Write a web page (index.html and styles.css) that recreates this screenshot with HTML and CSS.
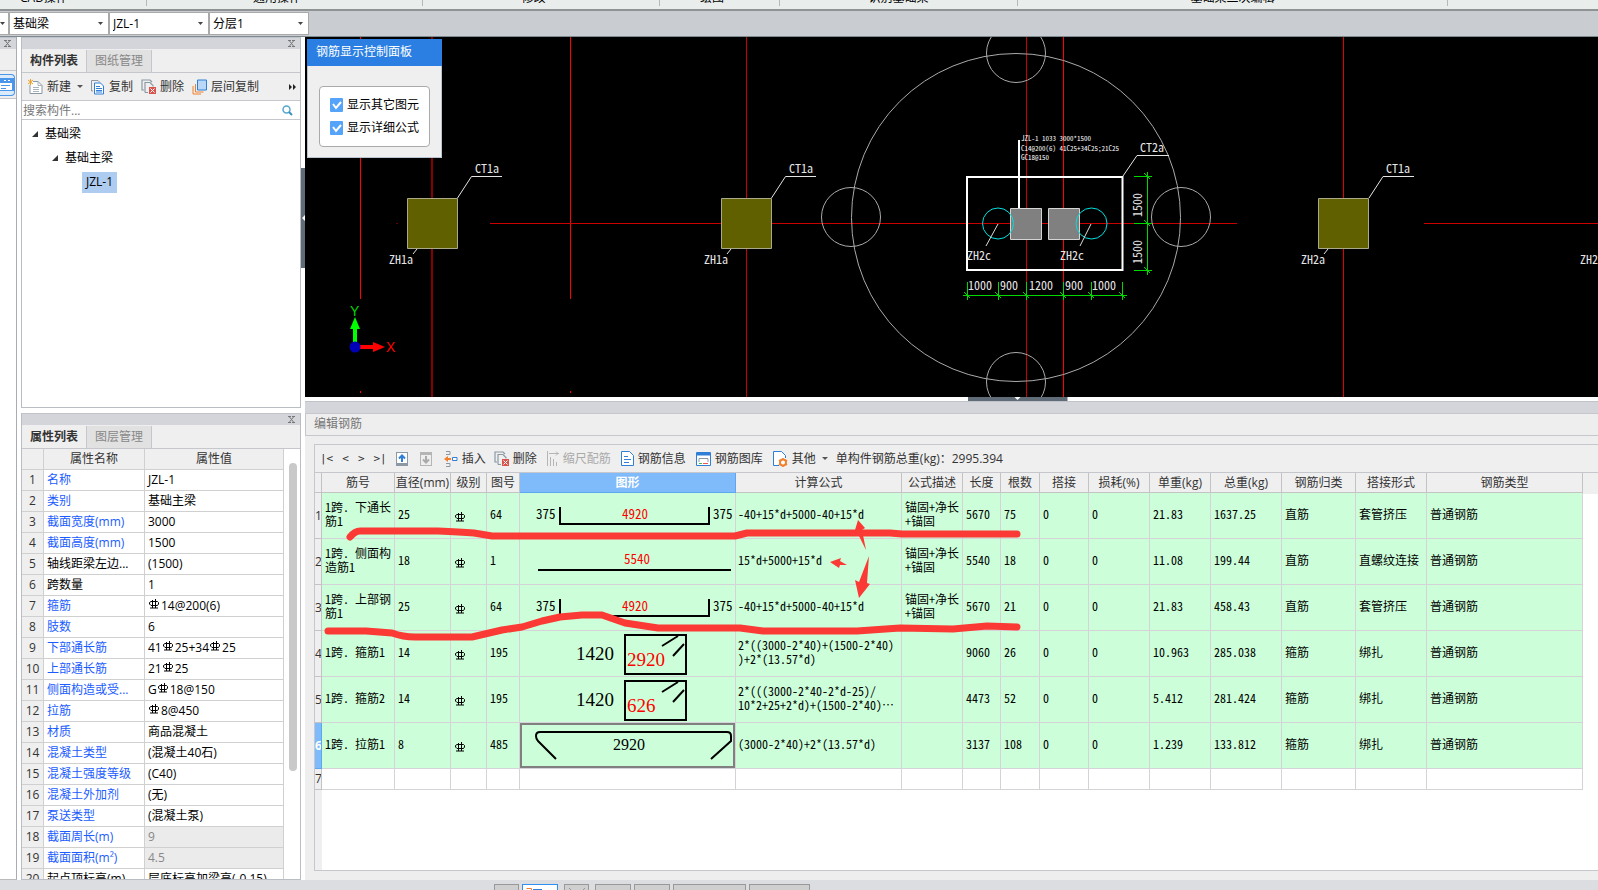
FILE: index.html
```html
<!DOCTYPE html>
<html lang="zh-CN">
<head>
<meta charset="utf-8">
<title>编辑钢筋</title>
<link rel="stylesheet" href="styles.css">
</head>
<body>
<svg class="defs" aria-hidden="true">
  <symbol id="rebar" viewBox="0 0 10 10"><path d="M3.500 1v8M6.500 0v9M1 9h8M2 2.500h6.500l1 1v1.500l-1 1.500H2L.5 5V3.500z" fill="none" stroke="currentColor"/></symbol>
  <symbol id="close" viewBox="0 0 7 7"><path d="M1.500 1l4 5M5.500 1l-4 5M0 .5h3M4 .5h3M0 6.500h3M4 6.500h3" fill="none" stroke="#777"/></symbol>
  <symbol id="del" viewBox="0 0 15 15"><path d="M3 11H1V1h8l2 2M4 13.500V3.500h5l3 3v1M4 13.500h3" fill="none" stroke="#8a99a3" stroke-width="1.200"/><path d="M8 8h7v7H8z" fill="#d9534f"/><path d="M9.500 9.500l4 4M13.500 9.500l-4 4" stroke="#fff"/></symbol>
</svg>

<header class="ribbon">
  <span class="group g-cad">CAD操作</span><span class="group g-common">通用操作</span><span class="group g-edit">修改</span><span class="group g-draw">绘图</span><span class="group g-detect">识别基础梁</span><span class="group g-second">基础梁二次编辑</span>
</header>

<div class="selectors">
  <select class="combo stub" aria-label="楼层"><option></option></select>
  <select class="combo" aria-label="构件类型"><option>基础梁</option></select>
  <select class="combo" aria-label="构件"><option>JZL-1</option></select>
  <select class="combo" aria-label="分层"><option>分层1</option></select>
</div>

<main class="workspace">
  <aside class="strip">
    <div class="titlebar"><button class="x" aria-label="关闭"><svg width="7" height="7"><use href="#close"/></svg></button></div>
    <div class="strip-head"></div>
    <div class="strip-tool"><button aria-label="导航"><svg width="14" height="13" viewBox="0 0 14 13"><path d="M0 0h14v13H0z" fill="#4a96ea"/><path d="M0 5h12v7H0z" fill="#fff"/><path d="M4 2.500h2M8 2.500h2" stroke="#fff"/><path d="M1 7.500h9M1 10.500h5" stroke="#4a96ea"/></svg></button></div>
  </aside>

  <section class="side">
    <div class="panel">
      <div class="titlebar"><button class="x" aria-label="关闭"><svg width="7" height="7"><use href="#close"/></svg></button></div>
      <div class="tabs"><button class="tab on">构件列表</button><button class="tab">图纸管理</button></div>
      <div class="tools">
        <button><svg width="15" height="16" viewBox="0 0 15 16"><path d="M5 2.500h5l4 4v8H2V6" fill="#fff" stroke="#8a99a3"/><path d="M10 2.500v4h4M5 8.500h6M5 10.500h6M5 12.500h6" fill="none" stroke="#a9b4bb"/><path d="M0 1l5 4M5 1L0 5M2.500 0v6" stroke="#f0a020"/></svg>新建<i class="caret"></i></button>
        <button><svg width="14" height="16" viewBox="0 0 14 16"><path d="M2 12H.5V1.500H7l2 2" fill="none" stroke="#8a99a3"/><path d="M3.500 4h6l3 3v8h-9z" fill="#fff" stroke="#2f7fd6"/><path d="M5 7.500h4M5 9.500h6M5 11.500h6M5 13h6" stroke="#2f7fd6"/></svg>复制</button>
        <button><svg width="15" height="15"><use href="#del"/></svg>删除</button>
        <button><svg width="15" height="16" viewBox="0 0 15 16"><path d="M5.500 1h9v10h-9z" fill="#b9d8f8" stroke="#2f7fd6"/><path d="M3.500 5v8h8M1 7v8h8" fill="none" stroke="#f08030"/></svg>层间复制</button>
        <button class="more" aria-label="更多"><svg width="8" height="6" viewBox="0 0 8 6"><path d="M0 0l3 3-3 3zM4 0l3 3-3 3z" fill="#222"/></svg></button>
      </div>
      <div class="search"><input type="text" placeholder="搜索构件..." aria-label="搜索构件"><svg width="11" height="11" viewBox="0 0 11 11"><circle cx="4.500" cy="4.500" r="3.500" fill="none" stroke="#58a6cf" stroke-width="1.500"/><path d="M7 7l3 3" stroke="#3b8fbf" stroke-width="2"/></svg></div>
      <div class="tree">
        <div class="node"><i class="tri"></i>基础梁</div>
        <div class="node l2"><i class="tri"></i>基础主梁</div>
        <div class="node l3"><span>JZL-1</span></div>
      </div>
    </div>

    <div class="panel">
      <div class="titlebar"><button class="x" aria-label="关闭"><svg width="7" height="7"><use href="#close"/></svg></button></div>
      <div class="tabs"><button class="tab on">属性列表</button><button class="tab">图层管理</button></div>
      <div class="props">
        <table>
          <colgroup><col class="p-no"><col class="p-name"><col></colgroup>
          <thead><tr><th></th><th>属性名称</th><th>属性值</th></tr></thead>
          <tbody>
            <tr><th>1</th><td>名称</td><td>JZL-1</td></tr>
            <tr><th>2</th><td>类别</td><td>基础主梁</td></tr>
            <tr><th>3</th><td>截面宽度(mm)</td><td>3000</td></tr>
            <tr><th>4</th><td>截面高度(mm)</td><td>1500</td></tr>
            <tr class="plain"><th>5</th><td>轴线距梁左边...</td><td>(1500)</td></tr>
            <tr class="plain"><th>6</th><td>跨数量</td><td>1</td></tr>
            <tr><th>7</th><td>箍筋</td><td><svg class="rb"><use href="#rebar"/></svg>14@200(6)</td></tr>
            <tr><th>8</th><td>肢数</td><td>6</td></tr>
            <tr><th>9</th><td>下部通长筋</td><td>41<svg class="rb"><use href="#rebar"/></svg>25+34<svg class="rb"><use href="#rebar"/></svg>25</td></tr>
            <tr><th>10</th><td>上部通长筋</td><td>21<svg class="rb"><use href="#rebar"/></svg>25</td></tr>
            <tr><th>11</th><td>侧面构造或受...</td><td>G<svg class="rb"><use href="#rebar"/></svg>18@150</td></tr>
            <tr><th>12</th><td>拉筋</td><td><svg class="rb"><use href="#rebar"/></svg>8@450</td></tr>
            <tr><th>13</th><td>材质</td><td>商品混凝土</td></tr>
            <tr><th>14</th><td>混凝土类型</td><td>(混凝土40石)</td></tr>
            <tr><th>15</th><td>混凝土强度等级</td><td>(C40)</td></tr>
            <tr><th>16</th><td>混凝土外加剂</td><td>(无)</td></tr>
            <tr><th>17</th><td>泵送类型</td><td>(混凝土泵)</td></tr>
            <tr class="locked"><th>18</th><td>截面周长(m)</td><td>9</td></tr>
            <tr class="locked"><th>19</th><td>截面面积(m²)</td><td>4.5</td></tr>
            <tr class="plain"><th>20</th><td>起点顶标高(m)</td><td>层底标高加梁高(-0.15)</td></tr>
          </tbody>
        </table>
        <div class="scroll"><i></i></div>
      </div>
    </div>
  </section>

  <div class="split-v"><i></i></div>

  <section class="center">
    <div class="canvas">
      <svg class="cad" width="100%" height="100%">
        <g transform="translate(-305 -37)" fill="none">
          <g stroke="#f00">
            <path d="M360.500 37V299M570.500 37V299M1063.500 37V397M360.500 391v2M570.500 391v2"/>
            <path d="M1343.500 37V397" stroke="#e00000"/>
            <path d="M432 37V397" stroke="#860000" stroke-width="2"/>
            <path d="M746.500 37V397M490 223.500H1237M1424 223.500H1900M1026.500 37V397" stroke="#c80000"/>
            <path d="M396 223.500h2" stroke="#600"/>
          </g>
          <g stroke="#aaa">
            <ellipse cx="1016" cy="217.500" rx="164.500" ry="164"/>
            <circle cx="1016" cy="53" r="29.500"/><circle cx="851" cy="217" r="29.500"/><circle cx="1181" cy="217" r="29.500"/><circle cx="1016" cy="382" r="29.500"/>
          </g>
          <g fill="#606000" stroke="#aaa98a">
            <path d="M407.500 198.500h50v50h-50zM721.500 198.500h50v50h-50zM1318.500 198.500h50v50h-50z"/>
          </g>
          <g stroke="#e4e4e4">
            <path d="M457.500 198L471.500 176.500H502M771.500 198L785.500 176.500H816M1369 198L1383 176.500H1414M1123 176L1137 155.500H1169"/>
            <path d="M413 254l4-5M727 254l4-5M1324 254l4-5"/>
          </g>
          <g fill="#808080" stroke="#d4d4d4">
            <path d="M1010.500 208.500h31v31h-31zM1048.500 208.500h31v31h-31z"/>
          </g>
          <path d="M967 177h155.500v93H967zM1019 140v68" stroke="#fff" stroke-width="2"/>
          <circle cx="998" cy="223.500" r="15.500" stroke="#00e0e0"/><circle cx="1091.500" cy="223.500" r="15.500" stroke="#00e0e0"/>
          <path d="M998 224l-12 22M1091 224l-11 22" stroke="#ddd"/>
          <g stroke="#00d800">
            <path d="M963 295.500h164M967.500 282v18M998.500 282v18M1026.500 282v18M1063.500 282v18M1091.500 282v18M1122.500 282v18M964 292l6 6M995 292l6 6M1023 292l6 6M1060 292l6 6M1088 292l6 6M1119 292l6 6"/>
            <path d="M1147.500 172v103M1134 176.500h18M1134 223.500h18M1134 270.500h18M1144 173l6 6M1144 220l6 6M1144 267l6 6"/>
          </g>
          <g class="cad-text">
            <text x="475" y="173">CT1a</text><text x="789" y="173">CT1a</text><text x="1386" y="173">CT1a</text><text x="1140" y="152">CT2a</text>
            <text x="389" y="264">ZH1a</text><text x="704" y="264">ZH1a</text><text x="1301" y="264">ZH2a</text><text x="1580" y="264">ZH2a</text>
            <text x="967" y="260">ZH2c</text><text x="1060" y="260">ZH2c</text>
            <text x="968" y="290">1000</text><text x="1000" y="290">900</text><text x="1029" y="290">1200</text><text x="1065" y="290">900</text><text x="1092" y="290">1000</text>
            <text transform="translate(1142 217) rotate(-90)">1500</text><text transform="translate(1142 264) rotate(-90)">1500</text>
          </g>
          <g class="cad-note">
            <text x="1021" y="141">JZL-1 1033 3000*1500</text><text x="1021" y="151">C14@200(6) 41C25+34C25;21C25</text><text x="1021" y="160">GC18@150</text>
          </g>
          <path d="M355 342V328" stroke="#0f0" stroke-width="4"/><path d="M350 329l5-12 5 12z" fill="#0f0"/>
          <path d="M360 347h14" stroke="#f00" stroke-width="4"/><path d="M373 342l12 5-12 5z" fill="#f00"/>
          <circle cx="355" cy="347" r="5.500" fill="#0000b8"/>
          <text class="axis" x="350" y="316" fill="#00d800">Y</text><text class="axis" x="386" y="352" fill="#f00">X</text>
        </g>
      </svg>
      <div class="dialog">
        <h2>钢筋显示控制面板</h2>
        <div class="dialog-body"><div class="checks">
          <label><input type="checkbox" checked>显示其它图元</label>
          <label><input type="checkbox" checked>显示详细公式</label>
        </div></div>
      </div>
    </div>
    <div class="split-h"><i></i></div>

    <div class="editor">
      <div class="titlebar"></div>
      <h2 class="editor-title">编辑钢筋</h2>
      <div class="editor-box">
        <div class="tools">
          <button class="nav">|&lt;</button><button class="nav">&lt;</button><button class="nav">&gt;</button><button class="nav">&gt;|</button>
          <button aria-label="上移" class="mv"><svg width="12" height="14" viewBox="0 0 12 14"><path d="M0 0h12v14H0z" fill="#8a99a3"/><path d="M1 1h10v10H1z" fill="#fff"/><path d="M6 10V4M3 6.500l3-3 3 3" fill="none" stroke="#2f7fd6" stroke-width="2"/></svg></button>
          <button aria-label="下移" class="mv"><svg width="12" height="14" viewBox="0 0 12 14"><path d="M0 0h12v14H0z" fill="#b5b5b5"/><path d="M1 3h10v10H1z" fill="#eee"/><path d="M6 4v6M3 7.500l3 3 3-3" fill="none" stroke="#aaa" stroke-width="2"/></svg></button>
          <button><svg width="14" height="16" viewBox="0 0 14 16"><path d="M2 .5h4v3H2M2 15.500h4v-3H2" fill="none" stroke="#8a99a3"/><path d="M0 8l4-3v2h3v2H4v2z" fill="#f08030"/><path d="M8.500 6.500H13v3H8.500z" fill="#fff" stroke="#2f7fd6"/></svg>插入</button>
          <button><svg width="15" height="15"><use href="#del"/></svg>删除</button>
          <button class="t-scale" disabled><svg width="12" height="15" viewBox="0 0 12 15"><path d="M.5 0v15M2 2.500h10M9 .5l2 2-2 2M3.500 6v9M6.500 8v7M9.500 11v4" fill="none" stroke="#b5b5b5"/></svg>缩尺配筋</button>
          <button class="t-info"><svg width="13" height="15" viewBox="0 0 13 15"><path d="M.5 .5h8l4 4v10H.5z" fill="#fff" stroke="#2f7fd6"/><path d="M3 5.500h4M3 8.500h7M3 11.500h5" stroke="#2f7fd6"/></svg>钢筋信息</button>
          <button class="t-lib"><svg width="15" height="14" viewBox="0 0 15 14"><path d="M.5 .5h14v13H.5z" fill="#fff" stroke="#2f7fd6"/><path d="M1 2h13" stroke="#2f7fd6" stroke-width="3"/><path d="M3 10V6.500h9V10" fill="none" stroke="#8a99a3"/><path d="M3 11.500h3" stroke="#4b4"/><path d="M7 11.500h5" stroke="#e55"/></svg>钢筋图库</button>
          <button class="t-other"><svg width="15" height="16" viewBox="0 0 15 16"><path d="M6 14.500H.5V.5h8l4 4V7" fill="#fff" stroke="#2f7fd6"/><circle cx="10" cy="11.500" r="3" fill="#fff" stroke="#f08030" stroke-width="2"/><path d="M10 7v1M10 15v1M6 9l1 1M13 13l1 1M6 14l1-1M13 10l1-1" stroke="#f08030" stroke-width="1.500"/></svg>其他<i class="caret"></i></button>
          <span class="total">单构件钢筋总重(kg)：2995.394</span>
        </div>
        <div class="grid-wrap">
          <table class="grid">
            <colgroup><col class="w-no"><col class="w-name"><col class="w-dia"><col class="w-lvl"><col class="w-fig"><col class="w-shape"><col class="w-calc"><col class="w-desc"><col class="w-len"><col class="w-cnt"><col class="w-lap"><col class="w-loss"><col class="w-loss"><col class="w-sum"><col class="w-cls"><col class="w-sum"><col class="w-type"></colgroup>
            <thead><tr><th></th><th>筋号</th><th>直径(mm)</th><th>级别</th><th>图号</th><th class="sel">图形</th><th>计算公式</th><th>公式描述</th><th>长度</th><th>根数</th><th>搭接</th><th>损耗(%)</th><th>单重(kg)</th><th>总重(kg)</th><th>钢筋归类</th><th>搭接形式</th><th>钢筋类型</th></tr></thead>
            <tbody>
              <tr><th>1</th><td>1跨. 下通长筋1</td><td>25</td><td><svg class="rb"><use href="#rebar"/></svg></td><td>64</td>
                <td class="shape"><svg width="215" height="45"><path d="M40 14v17h149V14" class="bar"/><text x="16" y="26">375</text><text x="102" y="26" class="red">4920</text><text x="193" y="26">375</text></svg></td>
                <td>-40+15*d+5000-40+15*d</td><td>锚固+净长+锚固</td><td>5670</td><td>75</td><td>0</td><td>0</td><td>21.83</td><td>1637.25</td><td>直筋</td><td>套管挤压</td><td>普通钢筋</td></tr>
              <tr><th>2</th><td>1跨. 侧面构造筋1</td><td>18</td><td><svg class="rb"><use href="#rebar"/></svg></td><td>1</td>
                <td class="shape"><svg width="215" height="45"><path d="M18 31h193" class="bar"/><text x="104" y="25" class="red">5540</text></svg></td>
                <td>15*d+5000+15*d</td><td>锚固+净长+锚固</td><td>5540</td><td>18</td><td>0</td><td>0</td><td>11.08</td><td>199.44</td><td>直筋</td><td>直螺纹连接</td><td>普通钢筋</td></tr>
              <tr><th>3</th><td>1跨. 上部钢筋1</td><td>25</td><td><svg class="rb"><use href="#rebar"/></svg></td><td>64</td>
                <td class="shape"><svg width="215" height="45"><path d="M40 14v17h149V14" class="bar"/><text x="16" y="26">375</text><text x="102" y="26" class="red">4920</text><text x="193" y="26">375</text></svg></td>
                <td>-40+15*d+5000-40+15*d</td><td>锚固+净长+锚固</td><td>5670</td><td>21</td><td>0</td><td>0</td><td>21.83</td><td>458.43</td><td>直筋</td><td>套管挤压</td><td>普通钢筋</td></tr>
              <tr><th>4</th><td>1跨. 箍筋1</td><td>14</td><td><svg class="rb"><use href="#rebar"/></svg></td><td>195</td>
                <td class="shape"><svg width="215" height="45"><path d="M105 4h61v39h-61zM142 15l16-10M153 25l11-12" class="bar"/><text x="56" y="29" class="big">1420</text><text x="107" y="35" class="big red">2920</text></svg></td>
                <td>2*((3000-2*40)+(1500-2*40)<br>)+2*(13.57*d)</td><td></td><td>9060</td><td>26</td><td>0</td><td>0</td><td>10.963</td><td>285.038</td><td>箍筋</td><td>绑扎</td><td>普通钢筋</td></tr>
              <tr><th>5</th><td>1跨. 箍筋2</td><td>14</td><td><svg class="rb"><use href="#rebar"/></svg></td><td>195</td>
                <td class="shape"><svg width="215" height="45"><path d="M105 4h61v39h-61zM142 15l16-10M153 25l11-12" class="bar"/><text x="56" y="29" class="big">1420</text><text x="107" y="35" class="big red">626</text></svg></td>
                <td>2*(((3000-2*40-2*d-25)/<br>10*2+25+2*d)+(1500-2*40)⋯</td><td></td><td>4473</td><td>52</td><td>0</td><td>0</td><td>5.412</td><td>281.424</td><td>箍筋</td><td>绑扎</td><td>普通钢筋</td></tr>
              <tr class="cur"><th>6</th><td>1跨. 拉筋1</td><td>8</td><td><svg class="rb"><use href="#rebar"/></svg></td><td>485</td>
                <td class="shape"><svg width="215" height="45"><path d="M36 36L18 18q-2-2-2-5 0-4 4-4H207q4 0 4 4v5L191 36" class="bar"/><text x="93" y="27" class="mid">2920</text></svg></td>
                <td>(3000-2*40)+2*(13.57*d)</td><td></td><td>3137</td><td>108</td><td>0</td><td>0</td><td>1.239</td><td>133.812</td><td>箍筋</td><td>绑扎</td><td>普通钢筋</td></tr>
              <tr class="blank"><th>7</th><td></td><td></td><td></td><td></td><td></td><td></td><td></td><td></td><td></td><td></td><td></td><td></td><td></td><td></td><td></td><td></td></tr>
            </tbody>
          </table>
        </div>
        <svg class="marks" width="720" height="200">
          <g transform="translate(-315 -445)" fill="#fc3a35">
            <g fill="none" stroke="#fc3a35" stroke-width="7" stroke-linecap="round" stroke-linejoin="round">
              <path d="M350 537Q355 531 360 531H438Q460 532 474 533L492 536H735L747 533H890L902 534H1017"/>
              <path d="M328 631H366L392 633Q403 637 415 637H472L502 630 522 627 542 621 560 617 582 615H602L625 623 658 628H740L763 631H857L900 628 953 629 987 626 1017 627"/>
            </g>
            <path d="M858 520l7 8-3 2 4 20-7-14-4-6zM830 562l11-4-1 3 7 4h-7l-1 3zM869 556l-2 27 3 1-11 14-4-18 4 2z"/>
          </g>
        </svg>
      </div>
    </div>
  </section>
</main>

<footer class="status">
  <button class="s1" aria-label="视图"></button><button class="s2 on" aria-label="动态输入"><svg width="16" height="5" viewBox="0 0 16 5"><path d="M.5 .5h5V5" fill="none" stroke="#f08030"/><path d="M7 1.500h9" stroke="#2f7fd6"/></svg></button><button class="s1 apart" aria-label="交点"><svg width="18" height="5" viewBox="0 0 18 5"><path d="M1 0l4 4M17 0l-4 4" stroke="#999"/></svg></button><button class="s2" aria-label="垂点"></button><button class="s2" aria-label="中点"></button><button class="s3" aria-label="顶点"></button><button class="s4" aria-label="坐标"></button>
</footer>
</body>
</html>
```
FILE: styles.css
```css
* { box-sizing: border-box; }
body {
  margin: 0;
  height: 100vh;
  display: flex;
  flex-direction: column;
  overflow: hidden;
  background: #fff;
  color: #000;
  font: 12px/16px "Open Sans", "Noto Sans CJK SC", sans-serif;
}
button, input, select { font: inherit; color: inherit; }
button { border: 0; padding: 0; background: none; }
h2 { margin: 0; font-size: 12px; font-weight: 400; }
.defs { position: absolute; width: 0; height: 0; }
.rb { width: 10px; height: 10px; margin: 0 2px 0 1px; }
.caret { border: 3px solid transparent; border-top-color: #555; border-bottom: 0; margin-left: 2px; }

/* ribbon */
.ribbon { display: flex; flex: 0 0 11px; overflow: hidden; background: #e9eeed; border-bottom: 2px solid #8f9394; }
.group { display: flex; align-items: flex-end; justify-content: center; height: 6px; line-height: 16px; border-right: 1px solid #b4b9ba; white-space: nowrap; }
.g-cad { width: 147px; justify-content: flex-start; padding-left: 20px; }
.g-common { width: 276px; padding-right: 15px; }
.g-edit { width: 237px; padding-right: 15px; }
.g-draw { width: 120px; padding-right: 15px; }
.g-detect { width: 238px; }
.g-second { width: 430px; }

.selectors { display: flex; flex: 0 0 26px; padding-top: 1px; background: #c9cdd1; border-bottom: 1px solid #7f8a90; }
.combo {
  width: 100px; height: 23px; padding: 0 3px; border: 1px solid #a9a9a9; border-radius: 0; appearance: none;
  background: #fff url("data:image/svg+xml,%3Csvg xmlns='http://www.w3.org/2000/svg' width='5' height='3'%3E%3Cpath d='M0 0h5L2.500 3z' fill='%23444'/%3E%3C/svg%3E") no-repeat right 5px center;
}
.stub { width: 9px; background-position: left 0 center; border-left: 0; }

/* workspace */
.workspace { flex: 1; min-height: 0; display: grid; grid-template-columns: 17px 4px 280px 4px minmax(0, 1fr); grid-template-rows: minmax(0, 1fr); }
.titlebar { display: flex; flex: none; align-items: center; justify-content: flex-end; height: 12px; padding-right: 5px; background: #d3d5da; border-top: 1px solid #c0c3c9; }
.x { display: flex; }
.strip { border-right: 1px solid #a9adb3; border-bottom: 1px solid #bbb; overflow: hidden; }
.strip-head { height: 22px; background: #efefef; border-bottom: 1px solid #c5c7cc; }
.strip-tool { display: flex; align-items: center; height: 28px; background: #efefef; border-bottom: 1px solid #c5c7cc; }
.strip-tool button { display: flex; align-items: center; width: 15px; height: 22px; border: 1px solid #4a96ea; border-left: 0; border-radius: 0 4px 4px 0; background: #dcebfb; overflow: hidden; }

.side { grid-column: 3; display: grid; grid-template-rows: minmax(0, 371fr) minmax(0, 467fr); gap: 5px; }
.panel { display: flex; flex-direction: column; min-height: 0; border: 1px solid #babdc3; border-top: 0; overflow: hidden; }
.tabs { display: flex; flex: 0 0 24px; padding-top: 1px; background: #efefef; border-bottom: 1px solid #c5c7cc; }
.tab { width: 65px; background: #e1e1e1; color: #888; border-right: 1px solid #c5c7cc; }
.tab.on { background: #efefef; color: #333; font-weight: 700; }
.tools { display: flex; align-items: center; height: 28px; background: #efefef; color: #333; border-bottom: 1px solid #c5c7cc; white-space: nowrap; }
.tools button { display: flex; align-items: center; gap: 4px; }
.panel .tools { padding: 0 3px 0 6px; gap: 8px; }
.panel .more { margin-left: auto; }
.search { display: flex; align-items: center; height: 19px; padding-right: 7px; border-bottom: 1px solid #c5c7cc; }
.search input { flex: 1; min-width: 0; border: 0; padding: 0 1px; height: 18px; outline: 0; background: none; }
.search input::placeholder { color: #777; }
.tree { padding-top: 2px; }
.node { display: flex; align-items: center; gap: 7px; height: 24px; padding-left: 10px; }
.l2 { padding-left: 30px; }
.l3 { padding-left: 60px; }
.l3 span { padding: 2px 4px 3px; background: #aecbf0; }
.tri { border: solid transparent; border-width: 0 0 6px 6px; border-bottom-color: #333; }

.props { display: flex; flex: 1; min-height: 0; overflow: hidden; }
.props table { flex: 1; align-self: flex-start; table-layout: fixed; border-collapse: separate; border-spacing: 0; width: 100%; }
.p-no { width: 22px; }
.p-name { width: 101px; }
.props th, .props td { height: 21px; padding: 0 0 0 3px; border-right: 1px solid #d0d0d0; border-bottom: 1px solid #d0d0d0; white-space: nowrap; overflow: hidden; text-align: left; font-weight: 400; line-height: 16px; }
.props th { padding: 0; text-align: center; background: #efefef; color: #333; }
.props td:nth-child(2) { color: #1a5cff; }
.props .plain td { color: #000; }
.props .locked td:last-child { background: #ebebeb; color: #888; }
.props .rb { vertical-align: 1px; }
.scroll { width: 16px; padding: 14px 3px 0 5px; }
.scroll i { display: block; height: 308px; border-radius: 4px; background: #c9c9c9; }

.split-v { padding-top: 131px; }
.split-v i { display: block; width: 4px; height: 100px; background: #5f6b76; clip-path: polygon(0 0, 100% 0, 100% 47%, 25% 50%, 100% 53%, 100% 100%, 0 100%); }
.split-h { display: flex; justify-content: center; background: #fff; }
.split-h i { width: 100px; height: 4px; margin-left: 132px; background: #5f6b76; clip-path: polygon(0 0, 47% 0, 50% 75%, 53% 0, 100% 0, 100% 100%, 0 100%); }

.center { grid-column: 5; display: grid; grid-template-rows: minmax(0, 360fr) 4px minmax(0, 479fr); }
.canvas { position: relative; background: #000; overflow: hidden; }
.cad { display: block; }
.cad-text { fill: #e6e6e6; font: 12px "Liberation Sans Narrow", "Noto Sans Mono CJK SC", sans-serif; }
.cad-note { fill: #fff; font: 7px "Liberation Sans Narrow", "Noto Sans Mono CJK SC", sans-serif; }
.axis { font: 14px "Liberation Sans Narrow", "Liberation Sans", sans-serif; }
.dialog { position: absolute; left: 2px; top: 2px; width: 135px; background: #efefef; border: 1px solid #b9c4d0; border-top: 0; }
.dialog h2 { margin: 0 -1px; padding: 5px 9px 6px; color: #fff; background: #2b7fe2; }
.dialog-body { padding: 20px 11px 10px; }
.checks { display: flex; flex-direction: column; gap: 7px; padding: 10px; border: 1px solid #aaa; border-radius: 4px; background: #fff; }
.checks label { display: flex; align-items: center; gap: 4px; white-space: nowrap; }
.checks input {
  appearance: none; width: 14px; height: 14px; margin: 0; border-radius: 1px;
  background: #55a4fa url("data:image/svg+xml,%3Csvg xmlns='http://www.w3.org/2000/svg' width='14' height='14'%3E%3Cpath d='M3 6l3 4 5-6' fill='none' stroke='white' stroke-width='2'/%3E%3C/svg%3E");
}

/* rebar editor */
.editor { display: flex; flex-direction: column; min-height: 0; padding-bottom: 9px; background: #eee; }
.editor-title { flex: 0 0 22px; padding: 2px 8px 3px; color: #777; border: 1px solid #c5c7cc; border-right: 0; }
.editor-box { position: relative; flex: 1; min-height: 0; margin: 8px 0 0 9px; border: 1px solid #c5c7cc; border-right: 0; display: flex; flex-direction: column; background: #fff; }
.editor-box .tools { flex: 0 0 28px; padding-left: 5px; }
.editor-box .tools button { margin-right: 8px; }
.editor-box .tools .nav { font: 11px "DejaVu Sans Mono", monospace; margin-right: 9px; }
.editor-box .tools .mv { margin-right: 12px; }
.editor-box .tools button:disabled { color: #aaa; }
.t-scale, .t-lib, .t-other { margin-left: 2px; }
.t-info { margin-left: 2px; }
.grid-wrap { flex: 1; min-height: 0; overflow: hidden; background: linear-gradient(#efefef, #efefef) 0 0 / 100% 21px no-repeat, linear-gradient(90deg, #efefef 7px, #fff 7px); }
.grid { table-layout: fixed; width: 1268px; border-collapse: separate; border-spacing: 0; }
.grid th, .grid td { padding: 0 3px; border-right: 1px solid #d5d3d8; border-bottom: 1px solid #d5d3d8; }
.grid th { padding: 0; font-weight: 400; color: #333; background: #efefef; white-space: nowrap; overflow: hidden; border-color: #c3c3c3; }
.grid thead th { height: 20px; line-height: 16px; }
.grid .sel { color: #fff; font-weight: 700; background: #7fbafa; border-color: #5fa6f0; }
.grid td { height: 46px; padding-bottom: 4px; overflow: hidden; background: #ccffd9; line-height: 14px; font-family: "Noto Sans Mono CJK SC", "Noto Sans CJK SC", monospace; text-align: left; word-break: break-all; }
.grid td:nth-child(7) { padding-left: 2px; white-space: nowrap; }
.grid .rb { vertical-align: -4px; }
.grid .blank td { height: 21px; background: #fff; }
.grid td.shape { padding: 0; }
.shape svg { display: block; }
.shape text { font-size: 13px; }
.shape .big { font: 19px "Liberation Serif", serif; }
.shape .mid { font: 16px "Liberation Serif", serif; }
.shape .red { fill: #f00; }
.bar { fill: none; stroke: #000; stroke-width: 2; }
.grid .cur th { color: #fff; font-weight: 700; background: #7fbafa; border-color: #5fa6f0; }
.grid .cur .shape { box-shadow: inset 0 0 0 2px #808080; }
.w-no { width: 7px; }
.w-name { width: 73px; }
.w-dia { width: 56px; }
.w-lvl { width: 36px; }
.w-fig { width: 33px; }
.w-shape { width: 216px; }
.w-calc { width: 166px; }
.w-desc, .w-loss { width: 61px; }
.w-len { width: 38px; }
.w-cnt { width: 39px; }
.w-lap { width: 49px; }
.w-sum { width: 71px; }
.w-cls { width: 74px; }
.w-type { width: 156px; }
.marks { position: absolute; left: 0; top: 0; pointer-events: none; }

.status { display: flex; flex: 0 0 10px; gap: 3px; padding: 4px 0 0 494px; background: #dcdde0; overflow: hidden; }
.status button { height: 22px; flex: none; display: flex; justify-content: center; padding-top: 3px; background: #cfcfd0; border: 1px solid #999; }
.status .on { background: #fff; border-color: #2f8ff0; justify-content: flex-start; padding-left: 3px; }
.status .apart { margin: 0 3px; }
.s1 { width: 25px; }
.s2 { width: 36px; }
.s3 { width: 73px; }
.s4 { width: 61px; }
```
